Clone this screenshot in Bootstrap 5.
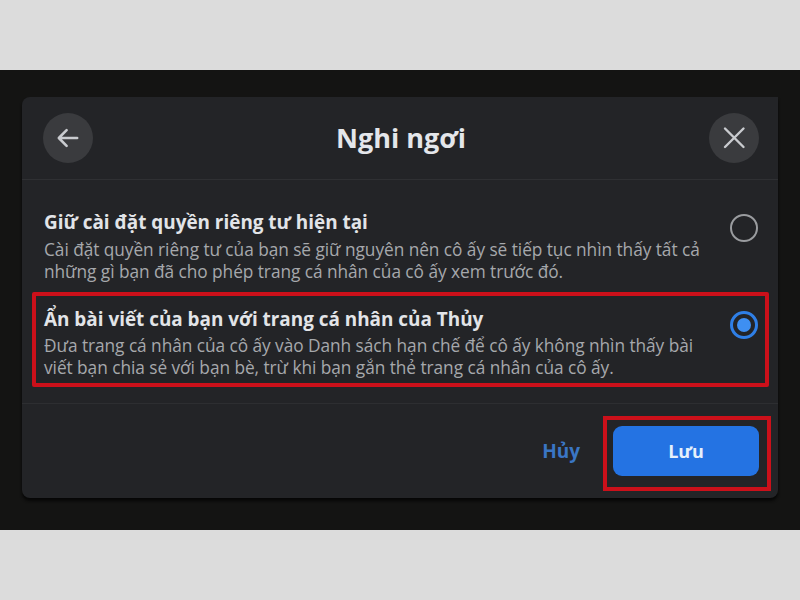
<!DOCTYPE html>
<html lang="vi">
<head>
<meta charset="utf-8">
<title>Nghi ngơi</title>
<link rel="stylesheet" href="https://cdn.jsdelivr.net/npm/bootstrap@5.3.0/dist/css/bootstrap.min.css">
<style>
html,body{height:600px;overflow:hidden;background:#dcdcdc;font-family:"Open Sans","Noto Sans",sans-serif}
.stage{height:460px;margin-top:70px;background:#141413;padding:27px 22px 32px}
.sheet{height:401px;background:#232427;border-radius:8px 0 8px 8px;box-shadow:0 3px 3px #070707}
.head{height:83px;padding:16px 19px 0 21px;border-bottom:1px solid #2f3033}
.roundbtn{width:50px;height:50px;border-radius:50%;background:#3a3b3e;flex:none}
.ttl{font-size:27px;font-weight:700;color:#e4e6ea;line-height:50px;margin:0}
.opts{height:224px;padding:27px 9px 0 11px;border-bottom:1px solid #2d2e31}
.opt{padding:0 11px}
.opt.first{height:85px;padding-right:9px;margin-top:-1px}
.opt.picked{height:95px;border:4px solid #cb101a;border-radius:2px;padding:11px 20px 0 8px;width:737px;margin:1px 0 0 -1px}
.otitle{font-size:18.9px;font-weight:700;color:#e2e4e8;line-height:24px;margin:0;white-space:nowrap}
.odesc{font-size:17.3px;color:#a6a8ac;line-height:22px;margin:0;white-space:nowrap;letter-spacing:-.05px}
.first .otitle{margin-top:4px}
.first .odesc{margin-top:5px}
.picked .odesc{margin-top:4px}
.dot{width:28px;height:28px;border-radius:50%;border:2px solid #9a9c9f;flex:none}
.first .dot{margin:8px 2px 0 0}
.picked .dot{border:3px solid #2f7fe6;margin:4px -13px 0 0;padding:4px}
.picked .dot i{display:block;width:14px;height:14px;border-radius:50%;background:#3e8ff2}
.foot{height:93px;padding:12px 7px 0 0}
.hyt{font-size:19px;font-weight:700;color:#3a76c4;margin:-11px 24px 0 0}
.savebox{width:168px;height:75px;border:4px solid #cb101a;padding:6px 8px 0 6px;margin-left:-1px}
.savebtn{width:146px;height:50px;background:#2473e3;border:0;border-radius:9px;color:#e6f0fb;font-size:18px;font-weight:700;padding:0}
</style>
</head>
<body>
<div class="stage">
  <div class="sheet">
    <div class="head d-flex align-items-start justify-content-between">
      <div class="roundbtn d-flex align-items-center justify-content-center">
        <svg width="24" height="22" viewBox="0 0 26 24" fill="none" stroke="#c9cbcf" stroke-width="2.800" stroke-linecap="round" stroke-linejoin="round"><path d="M23 12H3.500M11.500 3.500 3 12l8.500 8.500"/></svg>
      </div>
      <h1 class="ttl">Nghi ngơi</h1>
      <div class="roundbtn d-flex align-items-center justify-content-center">
        <svg width="24" height="24" viewBox="0 0 24 24" fill="none" stroke="#c9cbcf" stroke-width="2.400" stroke-linecap="round"><path d="M3 2.500 21.500 21M21.500 2.500 3 21"/></svg>
      </div>
    </div>
    <div class="opts">
      <div class="opt first d-flex align-items-start justify-content-between">
        <div>
          <p class="otitle">Giữ cài đặt quyền riêng tư hiện tại</p>
          <p class="odesc">Cài đặt quyền riêng tư của bạn sẽ giữ nguyên nên cô ấy sẽ tiếp tục nhìn thấy tất cả<br>những gì bạn đã cho phép trang cá nhân của cô ấy xem trước đó.</p>
        </div>
        <span class="dot"></span>
      </div>
      <div class="opt picked d-flex align-items-start justify-content-between">
        <div>
          <p class="otitle">Ẩn bài viết của bạn với trang cá nhân của Thủy</p>
          <p class="odesc">Đưa trang cá nhân của cô ấy vào Danh sách hạn chế để cô ấy không nhìn thấy bài<br>viết bạn chia sẻ với bạn bè, trừ khi bạn gắn thẻ trang cá nhân của cô ấy.</p>
        </div>
        <span class="dot"><i></i></span>
      </div>
    </div>
    <div class="foot d-flex align-items-start justify-content-end">
      <span class="hyt align-self-center">Hủy</span>
      <div class="savebox"><button type="button" class="btn savebtn">Lưu</button></div>
    </div>
  </div>
</div>
<script src="https://cdn.jsdelivr.net/npm/bootstrap@5.3.0/dist/js/bootstrap.bundle.min.js"></script>
</body>
</html>
